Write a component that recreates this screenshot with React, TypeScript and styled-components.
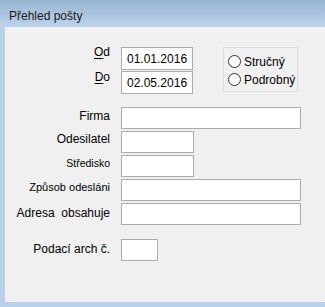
import React from "react";
import styled, { createGlobalStyle } from "styled-components";

const GlobalStyle = createGlobalStyle`
  html, body {
    margin: 0;
    padding: 0;
    background: #b9d1ea;
  }
  body {
    font-family: "Liberation Sans", Arial, sans-serif;
  }
`;

const Window = styled.div`
  display: flex;
  flex-direction: column;
  width: 325px;
  height: 307px;
  background: #b9d1ea;
  overflow: hidden;
`;

const TitleBar = styled.div`
  height: 27px;
  box-sizing: border-box;
  padding: 9px 0 0 9px;
  line-height: 14px;
  font-size: 12px;
  color: #1a1a1a;
  background: linear-gradient(#99b4d1, #bcd3ea);
`;

const Client = styled.div`
  flex: 1;
  margin: 0 0 5px 5px;
  padding-top: 20px;
  background: #f0f0f0;
  display: flex;
  flex-direction: column;
`;

const TopSection = styled.div`
  display: flex;
  align-items: flex-start;
`;

const DateGrid = styled.div`
  display: grid;
  grid-template-columns: 105px 71px;
  column-gap: 11px;
  row-gap: 1px;
`;

const FieldGrid = styled.div`
  display: grid;
  grid-template-columns: 105px auto;
  column-gap: 11px;
  row-gap: 2px;
  margin-top: 13px;
  justify-items: start;
`;

const Label = styled.label<{ $size?: number; $top?: number; $gap?: number }>`
  justify-self: end;
  align-self: start;
  font-size: ${(p) => p.$size ?? 12}px;
  line-height: 14px;
  padding-top: ${(p) => p.$top ?? 2}px;
  margin-top: ${(p) => p.$gap ?? 0}px;
  color: #000;
  white-space: pre;
  u {
    text-decoration-thickness: 1px;
    text-underline-offset: 2px;
  }
`;

const Box = styled.input<{ $w: number; $h?: number; $gap?: number }>`
  box-sizing: border-box;
  width: ${(p) => p.$w}px;
  height: ${(p) => p.$h ?? 22}px;
  margin: ${(p) => p.$gap ?? 0}px 0 0 0;
  padding: 0 5px;
  border: 1px solid #acacac;
  background: #fff;
  font-family: "Liberation Sans", Arial, sans-serif;
  font-size: 12px;
  color: #000;
  outline: none;
`;

const RadioGroup = styled.div`
  box-sizing: border-box;
  width: 75px;
  height: 45px;
  margin-left: 31px;
  padding: 7px 0 0 4px;
  border: 1px solid #dcdcdc;
  display: flex;
  flex-direction: column;
  gap: 5px;
`;

const RadioItem = styled.div`
  display: flex;
  align-items: center;
  gap: 3px;
  height: 13px;
  font-size: 12px;
  color: #000;
`;

const RadioCircle = styled.span`
  box-sizing: border-box;
  width: 13px;
  height: 13px;
  border-radius: 50%;
  border: 1px solid #333;
  background: #fff;
`;

export default function App() {
  const fields = [
    { label: "Firma", w: 180, size: 12, top: 2 },
    { label: "Odesilatel", w: 73, size: 12, top: 1 },
    { label: "Středisko", w: 73, size: 10.5, top: 1 },
    { label: "Způsob odesláni", w: 180, size: 11, top: 1 },
    { label: "Adresa  obsahuje", w: 180, size: 12, top: 3 },
  ];

  return (
    <Window>
      <GlobalStyle />
      <TitleBar>Přehled pošty</TitleBar>
      <Client>
        <TopSection>
          <DateGrid>
            <Label $top={0} $gap={-2}>
              <u>O</u>d
            </Label>
            <Box $w={72} $h={23} defaultValue="01.01.2016" />
            <Label $top={0} $gap={-1}>
              <u>D</u>o
            </Label>
            <Box $w={72} $h={23} defaultValue="02.05.2016" />
          </DateGrid>
          <RadioGroup>
            <RadioItem>
              <RadioCircle />
              Stručný
            </RadioItem>
            <RadioItem>
              <RadioCircle />
              Podrobný
            </RadioItem>
          </RadioGroup>
        </TopSection>
        <FieldGrid>
          {fields.map((f) => (
            <React.Fragment key={f.label}>
              <Label $size={f.size} $top={f.top}>
                {f.label}
              </Label>
              <Box $w={f.w} />
            </React.Fragment>
          ))}
          <Label $top={3} $gap={12}>
            Podací arch č.
          </Label>
          <Box $w={37} $gap={12} />
        </FieldGrid>
      </Client>
    </Window>
  );
}
